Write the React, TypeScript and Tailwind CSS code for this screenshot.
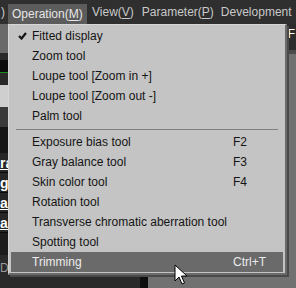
import React from "react";

const U = ({ c }: { c: string }) => <span className="underline underline-offset-[2px]">{c}</span>;

type Item = { label: string; key?: string; check?: boolean; active?: boolean } | "sep";

const items: Item[] = [
  { label: "Fitted display", check: true },
  { label: "Zoom tool" },
  { label: "Loupe tool [Zoom in +]" },
  { label: "Loupe tool [Zoom out -]" },
  { label: "Palm tool" },
  "sep",
  { label: "Exposure bias tool", key: "F2" },
  { label: "Gray balance tool", key: "F3" },
  { label: "Skin color tool", key: "F4" },
  { label: "Rotation tool" },
  { label: "Transverse chromatic aberration tool" },
  { label: "Spotting tool" },
  { label: "Trimming", key: "Ctrl+T", active: true },
];

const Tab = ({ t }: { t: string }) => (
  <div className="h-[20px] bg-[#262626] flex items-center border-b border-[#0a0a0a]">
    <span className="text-white font-bold text-[14px] underline">{t}</span>
  </div>
);

export default function App() {
  return (
    <div
      className="relative w-[296px] h-[288px] overflow-hidden bg-[#707070] text-[12px] leading-none"
      style={{ fontFamily: '"Liberation Sans", Arial, sans-serif' }}
    >
      {/* menu bar */}
      <div className="flex h-[24px] items-center bg-[#2f2f2f] text-[#c9c9c9] whitespace-nowrap">
        <div className="w-[8px] pl-[1px]">)</div>
        <div className="flex h-[20px] mt-[4px] w-[79px] items-center pl-[4px] bg-[#5c5c5c] text-[#e6e6e6]">
          Operation(<U c="M" />)
        </div>
        <div className="ml-[5px]">View(<U c="V" />)</div>
        <div className="ml-[8px]">Parameter(<U c="P" />)</div>
        <div className="ml-[7px]">Development</div>
      </div>

      {/* background panels */}
      <div className="flex h-[264px]">
        <div className="w-[140px] flex flex-col bg-[#1f1f1f]">
          <div className="h-[29px] bg-[#6a6a6a]" />
          <div className="h-[7px] bg-[#2a2a2a]" />
          <div className="h-[13px] bg-[#0c0c0c] border-b border-[#1a8a1a]" />
          <div className="h-[12px] bg-[#2a2a2a]" />
          <div className="h-[22px] bg-[#cfcfcf]" />
          <div className="h-[20px] bg-[#3a3a3a]" />
          <div className="h-[26px] bg-[#151515]" />
          <Tab t="ra" />
          <Tab t="ge" />
          <Tab t="ar" />
          <Tab t="al" />
          <div className="h-[22px] bg-[#1c1c1c]" />
          <div className="h-[33px] bg-[#2a2a2a] text-[#9a9a9a] pt-[7px]">De</div>
        </div>
        <div className="w-[8px] bg-[#0e0e0e]" />
        <div className="flex-1 flex flex-col">
          <div className="h-[26px] bg-[#2c2c2c] flex justify-end pr-[1px] pt-[4px] text-white">F</div>
          <div className="h-[4px] bg-[#4a4a4a]" />
          <div className="flex-1 bg-[#717171]" />
        </div>
      </div>

      {/* dropdown */}
      <div className="absolute left-[8px] top-[24px] w-[279px] border-t border-l border-[#d6d6d6] border-r-2 border-b-2 border-r-[#6a6a6a] border-b-[#6a6a6a] bg-[#c4c4c4] py-[1px] px-[2px] shadow-[2px_2px_0_#4a4a4a]">
        {items.map((it, i) =>
          it === "sep" ? (
            <div key={i} className="h-[6px] flex items-center px-[5px]">
              <div className="h-[1px] w-full bg-[#808080]" />
            </div>
          ) : (
            <div
              key={i}
              className={`flex h-[20px] items-center whitespace-nowrap ${
                it.active ? "bg-[#6a6a6a] text-[#ececec]" : "text-[#141414]"
              }`}
            >
              <div className="w-[21px] flex justify-center pl-[2px]">
                {it.check && (
                  <svg width="9" height="8" viewBox="0 0 9 8">
                    <path d="M1 4 L3.5 6.5 L8 1" stroke="#141414" strokeWidth="2.2" fill="none" />
                  </svg>
                )}
              </div>
              <div className="w-[201px]">{it.label}</div>
              <div>{it.key}</div>
            </div>
          )
        )}
      </div>

      {/* cursor */}
      <svg className="absolute left-[174px] top-[264px]" width="14" height="22" viewBox="0 0 14 22">
        <path
          d="M1 1 L1 17 L5 13 L8 20 L10.5 19 L7.5 12 L13 12 Z"
          fill="#ffffff"
          stroke="#000000"
          strokeWidth="1"
          strokeLinejoin="miter"
        />
      </svg>
    </div>
  );
}
